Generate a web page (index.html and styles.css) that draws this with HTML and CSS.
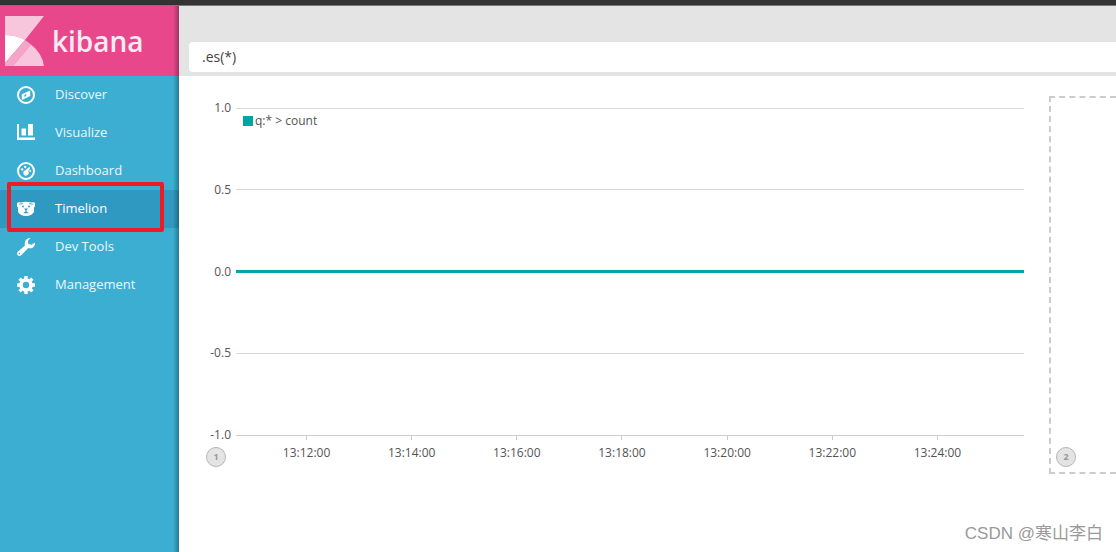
FILE: index.html
```
<!DOCTYPE html>
<html lang="en">
<head>
<meta charset="utf-8">
<title>Timelion - Kibana</title>
<link rel="stylesheet" href="styles.css">
</head>
<body>
<div class="topbar"></div>
<div class="app">
  <nav class="sidebar">
    <a class="brand" href="#">
      <svg class="brand-mark" viewBox="0 0 39 50" aria-hidden="true">
        <path fill="#f8c6dc" d="M0 0H39L20 24Q11 19 0 19Z"/>
        <path fill="#fff" d="M0 19Q11 19 20 24L0 47Z"/>
        <path fill="#f5a5c7" d="M20 24Q23 26 26 28.5L8 50H0V47Z"/>
        <path fill="#f8c6dc" d="M26 28.5Q37 37 39 50H8Z"/>
      </svg>
      <span class="brand-name">kibana</span>
    </a>
    <a class="nav-item" href="#">
      <svg class="icon" viewBox="0 0 18 18" aria-hidden="true"><circle cx="9" cy="9" r="8" fill="none" stroke="#fff" stroke-width="2"/><path fill="#fff" fill-rule="evenodd" d="M13.2 4.4V10L4.8 14V8.2ZM9 7.8L7.4 9V10.9L9.2 10.1Z"/></svg>
      <span class="nav-label">Discover</span>
    </a>
    <a class="nav-item" href="#">
      <svg class="icon" viewBox="0 0 18 18" aria-hidden="true"><path fill="#fff" d="M0 0H2V13.5H18V16H0ZM4.5 4.5H9V11.5H4.5ZM11 0H16V11.5H11Z"/></svg>
      <span class="nav-label">Visualize</span>
    </a>
    <a class="nav-item" href="#">
      <svg class="icon" viewBox="0 0 18 18" aria-hidden="true"><circle cx="9" cy="9" r="8" fill="none" stroke="#fff" stroke-width="2"/><path fill="#fff" d="M12.2 5L13.2 6L11.2 9.6A2.6 2.6 0 1 1 8 8.6Z"/><circle cx="8.2" cy="5" r="1.2" fill="#fff"/><circle cx="5.2" cy="7.4" r="1.2" fill="#fff"/><circle cx="13.2" cy="9" r="1" fill="#fff"/></svg>
      <span class="nav-label">Dashboard</span>
    </a>
    <a class="nav-item active" href="#">
      <svg class="icon" viewBox="0 0 18 18" aria-hidden="true"><path fill="#fff" d="M0 3Q1 1.7 4 2.5Q9 1.2 14 2.5Q17 1.7 18 3V6.5L17 7.6V12Q14.5 16 9 16Q3.5 16 1 12V7.6L0 6.5Z"/><path fill="none" stroke="#2f99c1" stroke-width=".8" d="M2 4.2L6 3.6M12 3.6L16 4.2"/><g fill="#2f99c1"><circle cx="6" cy="6.5" r=".9"/><circle cx="12" cy="6.5" r=".9"/><path d="M7.2 8.6H10.8L9.5 10.6V11.6L12 13.2H6L8.5 11.6V10.6Z"/></g></svg>
      <span class="nav-label">Timelion</span>
      <span class="highlight"></span>
    </a>
    <a class="nav-item" href="#">
      <svg class="icon" viewBox="0 0 18 18" aria-hidden="true"><path fill="#fff" fill-rule="evenodd" d="M13.4 0L10.8 3.1L11.4 6L14.6 6.7L18 4.5Q18.4 8 15.7 9.7Q13.7 10.8 11.3 10L4.2 17.2Q2.2 18.6.7 17.2Q-.7 15.6.8 13.8L8 7.6Q6.9 4 9.5 1.3Q11.4-.2 13.4 0ZM2.4 14.8A.8.8 0 1 0 2.4 16.4A.8.8 0 1 0 2.4 14.8Z"/></svg>
      <span class="nav-label">Dev Tools</span>
    </a>
    <a class="nav-item" href="#">
      <svg class="icon" viewBox="0 0 18 18" aria-hidden="true"><circle cx="9" cy="9" r="5" fill="none" stroke="#fff" stroke-width="3.6"/><path stroke="#fff" stroke-width="3.4" d="M9 0V4M9 14V18M0 9H4M14 9H18M2.6 2.6L5.4 5.4M12.6 12.6L15.4 15.4M15.4 2.6L12.6 5.4M5.4 12.6L2.6 15.4"/></svg>
      <span class="nav-label">Management</span>
    </a>
  </nav>
  <main class="main">
    <form class="query-bar">
      <input class="query" type="text" value=".es(*)" aria-label="Timelion expression">
    </form>
    <div class="sheet">
      <section class="cell">
        <div class="chart">
          <div class="row"><span class="y-label">1.0</span><span class="line"></span></div>
          <div class="row"><span class="y-label">0.5</span><span class="line"></span></div>
          <div class="row"><span class="y-label">0.0</span><span class="line series"></span></div>
          <div class="row"><span class="y-label">-0.5</span><span class="line"></span></div>
          <div class="row"><span class="y-label">-1.0</span><span class="line axis"></span></div>
          <div class="legend"><span class="swatch"></span>q:* &gt; count</div>
        </div>
        <div class="x-axis">
          <span class="tick">13:12:00</span>
          <span class="tick">13:14:00</span>
          <span class="tick">13:16:00</span>
          <span class="tick">13:18:00</span>
          <span class="tick">13:20:00</span>
          <span class="tick">13:22:00</span>
          <span class="tick">13:24:00</span>
        </div>
        <span class="badge">1</span>
      </section>
      <section class="cell empty">
        <span class="badge">2</span>
      </section>
    </div>
  </main>
</div>
<div class="watermark">CSDN @寒山李白</div>
</body>
</html>
```
FILE: styles.css
```
* { box-sizing: border-box; }
body {
  margin: 0;
  min-height: 100vh;
  display: flex;
  flex-direction: column;
  overflow: hidden;
  background: #fff;
  color: #2d2d2d;
  font-family: "Open Sans", "Noto Sans CJK SC", sans-serif;
  font-size: 12px;
}
.topbar {
  height: 6px;
  background: #333;
  border-bottom: 1px solid #777;
}
.app {
  flex: 1;
  display: flex;
}
.sidebar {
  flex: none;
  width: 179px;
  background: #3caed2;
  position: relative;
}
.sidebar::after {
  content: "";
  position: absolute;
  inset: 0 0 0 auto;
  width: 6px;
  background: linear-gradient(to right, rgba(0, 0, 0, 0), rgba(0, 0, 0, 0.3));
}
.brand {
  height: 70px;
  display: flex;
  align-items: center;
  gap: 8px;
  padding-left: 5px;
  background: #e8488b;
  color: #fdeaf2;
  text-decoration: none;
}
.brand-mark {
  width: 39px;
  height: 50px;
}
.brand-name {
  font-size: 28px;
  font-weight: 600;
  line-height: 40px;
}
.nav-item {
  position: relative;
  height: 38px;
  display: flex;
  align-items: center;
  gap: 20px;
  padding-left: 17px;
  color: #ecf7fb;
  font-size: 13px;
  line-height: 18px;
  text-decoration: none;
}
.nav-label {
  padding-bottom: 2px;
}
.nav-item.active {
  background: #2f99c1;
  color: #fff;
}
.icon {
  width: 18px;
  height: 18px;
}
.highlight {
  position: absolute;
  inset: -8px 15px -4px 7px;
  border: 4px solid #ed1c24;
  border-radius: 2px;
  z-index: 1;
}
.main {
  flex: 1;
  min-width: 0;
}
.query-bar {
  padding: 36px 0 4px 10px;
  background: #e4e4e4;
}
.query {
  display: block;
  width: 100%;
  height: 30px;
  padding: 0 13px 2px;
  border: 0;
  border-radius: 4px 0 0 4px;
  background: #fff;
  color: #444;
  font: 14px "Open Sans", sans-serif;
}
.sheet {
  display: grid;
  grid-template-columns: minmax(0, 1fr) 67px;
  gap: 20px;
  padding: 20px 0 0 20px;
}
.cell {
  position: relative;
  height: 378px;
  border: 2px solid transparent;
  padding-right: 3px;
}
.empty {
  border: 2px dashed #ccc;
  border-right: 0;
}
.chart {
  position: relative;
  height: 345px;
  margin-top: 1px;
  display: flex;
  flex-direction: column;
  justify-content: space-between;
}
.row {
  height: 18px;
  display: flex;
  align-items: center;
  gap: 5px;
  color: #545454;
}
.y-label {
  width: 30px;
  text-align: right;
  line-height: 18px;
}
.line {
  flex: 1;
  height: 1px;
  background: #d9d9d9;
}
.axis { background: #ccc; }
.series {
  height: 3px;
  background: #00a5a5;
}
.legend {
  position: absolute;
  top: 13px;
  left: 42px;
  display: flex;
  align-items: center;
  gap: 2px;
  color: #545454;
  line-height: 18px;
}
.swatch {
  width: 10px;
  height: 10px;
  background: #00a5a5;
}
.x-axis {
  display: flex;
  margin-top: -9px;
  padding: 0 34px 0 53px;
  color: #545454;
}
.tick {
  flex: 1;
  text-align: center;
  line-height: 18px;
}
.tick::before {
  content: "";
  display: block;
  width: 1px;
  height: 5px;
  margin: 0 auto 4px;
  background: #ccc;
}
.badge {
  position: absolute;
  left: 5px;
  bottom: 5px;
  width: 20px;
  height: 20px;
  border: 1px solid #b5b5b5;
  border-radius: 50%;
  background: #e4e4e4;
  color: #999;
  font-size: 9px;
  font-weight: 700;
  line-height: 18px;
  text-align: center;
}
.watermark {
  position: absolute;
  right: 13px;
  bottom: 6px;
  color: #999;
  font: 17px/24px "Liberation Sans", "Noto Sans CJK SC", sans-serif;
}
```
